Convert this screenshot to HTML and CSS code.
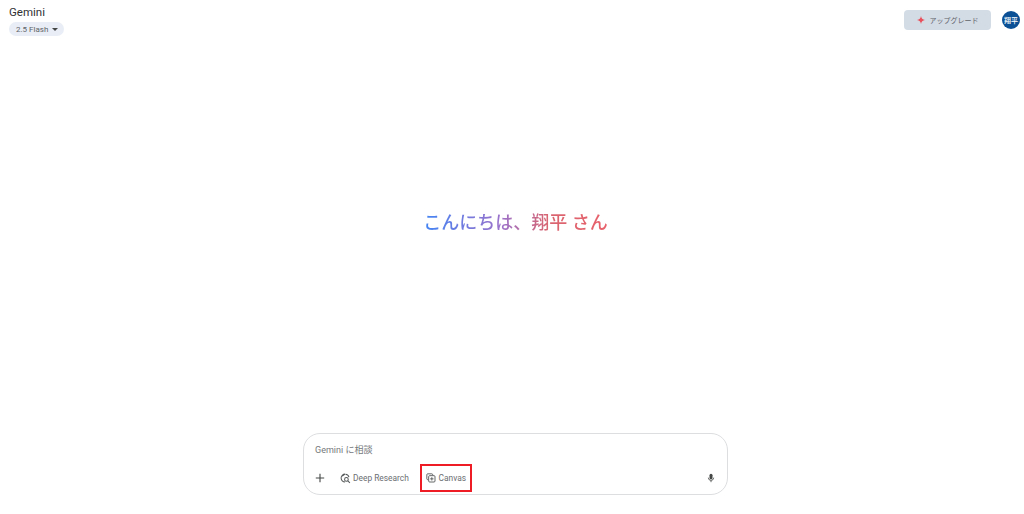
FILE: index.html
```html
<!DOCTYPE html>
<html>

<head>
	<title>Gemini</title>
	<link rel="stylesheet" href="styles.css">
</head>

<body>
	<div class="page">

		<div class="topbar">
			<div class="brand">
				<div class="brand_name">Gemini</div>
				<div class="model_pill">2.5 Flash <span class="caret"></span></div>
			</div>
			<div class="top_right">
				<div class="upgrade">
					<svg class="spark" viewBox="0 0 12 12"><path d="M6 0C6.4 3.6 8.4 5.6 12 6C8.4 6.4 6.4 8.4 6 12C5.6 8.4 3.6 6.4 0 6C3.6 5.6 5.6 3.6 6 0Z" /></svg>
					<span>アップグレード</span>
				</div>
				<div class="avatar">翔平</div>
			</div>
		</div>

		<div class="greeting_wrap">
			<div class="greeting">こんにちは、翔平 さん</div>
		</div>

		<div class="composer_wrap">
			<div class="composer">
				<div class="prompt">Gemini に相談</div>
				<div class="tools">
					<div class="tools_left">
						<svg class="plus" viewBox="0 0 10 10"><path d="M5 .8V9.2M.8 5H9.2" /></svg>
						<div class="tool tool_research">
							<svg class="icon icon_research" viewBox="0 0 12 12">
								<path class="line" d="M5.5 1.2A4.3 4.3 0 1 0 5.5 9.8M1.8 3.5C3.5 3 4.5 2 5.5 1.2M6 1.3A4.3 4.3 0 0 1 9.8 4.6" />
								<circle class="line" cx="7" cy="7" r="2" />
								<path class="line" d="M8.5 8.5L10.8 10.8" />
							</svg>
							<span>Deep Research</span>
						</div>
						<div class="tool tool_canvas">
							<svg class="icon" viewBox="0 0 12 12">
								<path class="line" d="M8 2.6V2A1 1 0 0 0 7 1H2A1 1 0 0 0 1 2V7A1 1 0 0 0 2 8H2.6" />
								<rect class="line" x="3.2" y="3.2" width="7.6" height="7.6" rx="1.2" />
								<path class="line" d="M7 5V9M5 7H9" />
							</svg>
							<span>Canvas</span>
						</div>
					</div>
					<svg class="mic" viewBox="0 0 12 12">
						<rect x="4.2" y="1" width="3.6" height="6.4" rx="1.8" />
						<path class="line" d="M2.8 5.6A3.2 3.2 0 0 0 9.2 5.6M6 8.8V11" />
					</svg>
				</div>
			</div>
		</div>

	</div>
</body>

</html>
```

FILE: styles.css
```css
* {
	box-sizing: border-box;
}

body {
	margin: 0;
	background-color: #ffffff;
	font-family: "Roboto", "Noto Sans CJK JP", sans-serif;
	color: #444746;
}

.page {
	display: flex;
	flex-direction: column;
	height: 514px;
	overflow: hidden;
}

.topbar {
	display: flex;
	justify-content: space-between;
	align-items: flex-start;
	height: 36px;
	padding: 5px 4px 0 9px;
}

.brand_name {
	font-size: 11.5px;
	line-height: 14px;
	color: #303134;
}

.model_pill {
	display: flex;
	align-items: center;
	gap: 4px;
	width: 55px;
	height: 14px;
	margin-top: 3px;
	padding-left: 7px;
	background-color: #e9eef6;
	border-radius: 7px;
	font-size: 8px;
	color: #5f6368;
}

.caret {
	border-left: 3px solid transparent;
	border-right: 3px solid transparent;
	border-top: 3px solid #444746;
}

.top_right {
	display: flex;
	align-items: center;
	gap: 11px;
	margin-top: 5px;
}

.upgrade {
	display: flex;
	align-items: center;
	justify-content: center;
	gap: 5px;
	width: 87px;
	height: 20px;
	background-color: #d3dbe5;
	border-radius: 4px;
	font-size: 7px;
	color: #5f6368;
}

.spark {
	width: 8px;
	height: 8px;
	fill: #e8505b;
}

.avatar {
	display: flex;
	align-items: center;
	justify-content: center;
	width: 18px;
	height: 18px;
	background-color: #0b4f94;
	border-radius: 50%;
	font-size: 7px;
	font-weight: 500;
	color: #ffffff;
}

.greeting_wrap {
	display: flex;
	justify-content: center;
	height: 397px;
	padding-top: 175px;
	padding-left: 7px;
}

.greeting {
	height: 24px;
	background: linear-gradient(90deg, #4285f4 0%, #9b72cb 42%, #d96570 68%, #e8606a 100%);
	-webkit-background-clip: text;
	background-clip: text;
	color: transparent;
	font-size: 18px;
	line-height: 24px;
	font-weight: 500;
}

.composer_wrap {
	display: flex;
	justify-content: center;
	padding-left: 7px;
}

.composer {
	width: 425px;
	height: 62px;
	padding: 10px 11px 0 11px;
	border: 1px solid #dddee0;
	border-radius: 17px;
}

.prompt {
	font-size: 9px;
	line-height: 12px;
	color: #75787c;
}

.tools {
	display: flex;
	justify-content: space-between;
	align-items: center;
	margin-top: 9px;
	height: 26px;
}

.tools_left {
	display: flex;
	align-items: center;
}

.plus {
	width: 10px;
	height: 10px;
	stroke: #444746;
	stroke-width: 1.1;
	fill: none;
}

.tool {
	display: flex;
	align-items: center;
	gap: 3px;
	font-size: 8.4px;
	color: #6b6e72;
}

.tool_research {
	margin-left: 15px;
	gap: 2px;
}

.tool_canvas {
	justify-content: center;
	width: 52px;
	height: 28px;
	margin-left: 11px;
	border: 2px solid #ee1c25;
}

.icon {
	width: 10px;
	height: 10px;
}

.icon_research {
	width: 11px;
	height: 11px;
}

.line {
	fill: none;
	stroke: #555859;
	stroke-width: 1.1;
}

.mic {
	width: 10px;
	height: 10px;
	fill: #444746;
}
```
